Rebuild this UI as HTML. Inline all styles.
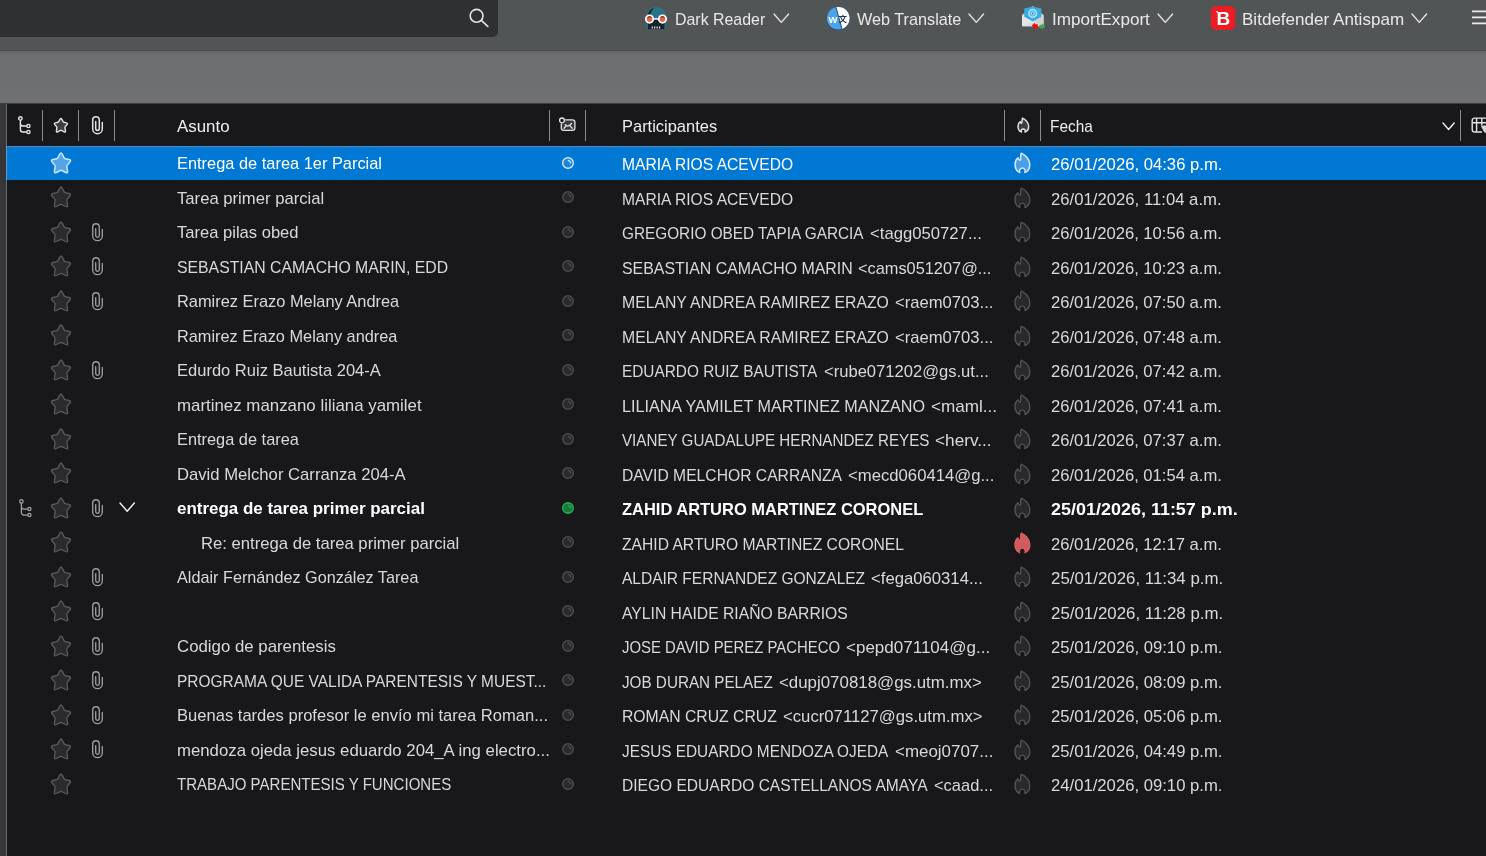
<!DOCTYPE html>
<html lang="es"><head><meta charset="utf-8"><title>Bandeja de entrada</title>
<style>
html,body{margin:0;padding:0}
body{width:1486px;height:856px;overflow:hidden;position:relative;background:#18181b;
 font-family:"Liberation Sans",sans-serif;color:#ececee;-webkit-font-smoothing:antialiased}
.abs,.ic,.t{position:absolute}
.ic{display:block;overflow:visible}
.t,.tb{transform-origin:0 50%}
.t,.tb{filter:grayscale(1)}
.t{white-space:nowrap;line-height:20px;height:20px;font-size:17.0px}
#toolbar{position:absolute;left:0;top:0;width:1486px;height:50px;background:#525556}
#tbline{position:absolute;left:0;top:50px;width:1486px;height:1px;background:#47494b}
#search{position:absolute;left:0;top:0;width:498px;height:37px;background:#2f3032;border-radius:0 0 5px 0}
#bar2{position:absolute;left:0;top:51px;width:1486px;height:52px;background:linear-gradient(#656668,#6e6f71 5px,#6f7072)}
#bar2b{position:absolute;left:0;top:103px;width:1486px;height:1px;background:#3d3e40}
#lstrip{position:absolute;left:0;top:104px;width:6px;height:752px;background:#343637}
#lline{position:absolute;left:6px;top:104px;width:1px;height:752px;background:#6b6b6b}
.tb{position:absolute;white-space:nowrap;font-size:16.2px;line-height:20px;height:20px;top:8.5px;color:#e9e9ea}
.sep{position:absolute;top:110px;width:1px;height:31px;background:#8c8c8f}
.row{position:absolute;left:7px;width:1479px}
.row.sel{background:#0078d4;border-top:1px solid #4a8fc6;box-sizing:border-box}
.hd{color:#ededef}
b,.b{font-weight:bold}
</style></head><body>

<div id="toolbar"></div><div id="tbline"></div><div id="search"></div>
<svg class="ic" style="left:466px;top:5px" width="26" height="26" viewBox="0 0 26 26"><g fill="none" stroke="#e4e4e6" stroke-width="1.6" stroke-linecap="round"><circle cx="10.6" cy="10.8" r="6.4"/><path d="M15.3 15.4 L21.8 21.4"/></g></svg>
<div id="bar2"></div><div id="bar2b"></div><div id="lstrip"></div><div id="lline"></div>
<svg class="ic" style="left:644px;top:5px" width="26" height="26" viewBox="0 0 26 26">
<path d="M2.5 24.1 V11.4 A9.7 9.7 0 0 1 21.9 11.4 V24.1 Z" fill="#2a7287"/>
<path d="M3.9 9.2 C5 5.9 7 4 9.9 3.1 C8 5 7 6.8 6.4 9.2 Z" fill="#131c24"/>
<path d="M3.9 15 H20.5 V24.1 H3.9 Z" fill="#17222c"/>
<circle cx="5.55" cy="14.1" r="3.7" fill="#e9633f" stroke="#fff" stroke-width="1.8"/>
<circle cx="18.45" cy="14.1" r="3.7" fill="#e9633f" stroke="#fff" stroke-width="1.8"/>
<path d="M9.6 13.9 H14.4" stroke="#fff" stroke-width="1.4"/>
<path d="M2.9 12.6 A2.9 2.9 0 0 1 8.2 12.6 Z M15.8 12.6 A2.9 2.9 0 0 1 21.1 12.6 Z" fill="#3a2a28" opacity=".75"/>
<path d="M8.3 21.4 V23.5 M10.7 21.4 V23.5 M13.1 21.4 V23.5 M15.5 21.4 V23.5" stroke="#dfecef" stroke-width="1.2"/>
</svg>
<div class="tb" style="left:675.4px;transform:scaleX(0.9827);" id="tb0">Dark Reader</div>
<svg class="ic" style="left:772.70px;top:12.60px" width="16.6" height="10.4" viewBox="-1 -1 16.6 10.4"><path d="M0 0 L7.3 8.4 L14.6 0" fill="none" stroke="#e9e9ea" stroke-width="1.3" stroke-linecap="round" stroke-linejoin="round"/></svg>
<svg class="ic" style="left:826px;top:6px;will-change:transform" width="25" height="25" viewBox="0 0 25 25">
<defs><clipPath id="wc"><circle cx="12.2" cy="12.2" r="11.3"/></clipPath></defs>
<circle cx="12.2" cy="12.5" r="11.6" fill="#20476b"/>
<g clip-path="url(#wc)"><rect width="25" height="25" fill="#4ba4ea"/><path d="M9.6 0 H25 V25 H16.6 Z" fill="#fdfdfd"/>
<path d="M9.6 0 L16.6 25" stroke="#1f3c58" stroke-width="0.9"/></g>
<text x="2.4" y="16.6" font-family="Liberation Sans, sans-serif" font-weight="bold" font-size="11.5" fill="#fff">w</text>
<text x="12.6" y="16.2" font-family="Liberation Sans, Noto Sans CJK SC, sans-serif" font-weight="bold" font-size="8.5" fill="#22384d">文</text>
</svg>
<div class="tb" style="left:856.6px;transform:scaleX(1.0021);" id="tb1">Web Translate</div>
<svg class="ic" style="left:968.00px;top:12.60px" width="16.6" height="10.4" viewBox="-1 -1 16.6 10.4"><path d="M0 0 L7.3 8.4 L14.6 0" fill="none" stroke="#e9e9ea" stroke-width="1.3" stroke-linecap="round" stroke-linejoin="round"/></svg>
<svg class="ic" style="left:1020px;top:4px" width="28" height="28" viewBox="0 0 28 28">
<path d="M2 11 L12.8 2 L23.6 11 V22.3 H2 Z" fill="#d9dadb"/>
<path d="M4.2 4.4 L9 3.6 L12.8 2.6 L16.6 3.6 L21.4 4.4 V13 L12.8 18 L4.2 13 Z" fill="#39a9e2"/>
<circle cx="12.7" cy="9.4" r="4.6" fill="#a6e4ff"/><circle cx="12.7" cy="9.4" r="2.6" fill="none" stroke="#39a9e2" stroke-width="1"/>
<circle cx="12.7" cy="9.4" r="1" fill="#2b7fb0"/>
<path d="M2 11.5 L12.8 17.6 L2 22.3 Z" fill="#e4e5e6"/><path d="M23.6 11.5 L12.8 17.6 L23.6 22.3 Z" fill="#cfd0d2"/>
<path d="M2 22.3 L12.8 17 L23.6 22.3 Z" fill="#dcdddf"/>
<path d="M11.6 21.5 L15 18.8 V20.2 H17.8 V24.4 H15.6 L15.4 25.6 Z" fill="#f20d0d"/>
<path d="M25.4 22.2 L22 19.4 V20.8 H19.4 V24.6 H22 V25.6 Z" fill="#41a852"/>
</svg>
<div class="tb" style="left:1051.6px;transform:scaleX(1.0559);" id="tb2">ImportExport</div>
<svg class="ic" style="left:1157.30px;top:12.60px" width="16.6" height="10.4" viewBox="-1 -1 16.6 10.4"><path d="M0 0 L7.3 8.4 L14.6 0" fill="none" stroke="#e9e9ea" stroke-width="1.3" stroke-linecap="round" stroke-linejoin="round"/></svg>
<svg class="ic" style="left:1210px;top:5px;will-change:transform" width="26" height="26" viewBox="0 0 26 26">
<rect x="0.9" y="1" width="24.4" height="24" rx="5.2" fill="#ec1c24"/>
<text x="13.3" y="19.9" text-anchor="middle" font-family="Liberation Sans, sans-serif" font-weight="bold" font-size="19" fill="#fff">B</text><path d="M5.7 6.25 H8 V8.4 Z" fill="#fff"/>
</svg>
<div class="tb" style="left:1242.2px;transform:scaleX(1.0534);" id="tb3">Bitdefender Antispam</div>
<svg class="ic" style="left:1410.70px;top:12.60px" width="16.6" height="10.4" viewBox="-1 -1 16.6 10.4"><path d="M0 0 L7.3 8.4 L14.6 0" fill="none" stroke="#e9e9ea" stroke-width="1.3" stroke-linecap="round" stroke-linejoin="round"/></svg>
<svg class="ic" style="left:1472px;top:8px" width="14" height="20" viewBox="0 0 14 20"><path d="M0 3.3 H14 M0 9.4 H14 M0 15.4 H14" stroke="#ececed" stroke-width="1.7" fill="none"/></svg>
<div class="sep" style="left:42px"></div>
<div class="sep" style="left:78px"></div>
<div class="sep" style="left:114px"></div>
<div class="sep" style="left:549px"></div>
<div class="sep" style="left:585px"></div>
<div class="sep" style="left:1004px"></div>
<div class="sep" style="left:1040px"></div>
<div class="sep" style="left:1460px"></div>
<svg class="ic" style="left:18.40px;top:116.00px" width="13" height="19" viewBox="0 0 13 19"><g fill="none" stroke="#e6e6e8" stroke-width="1.4"><circle cx="2.4" cy="2.4" r="1.7"/><circle cx="10.4" cy="10" r="1.6"/><circle cx="10.4" cy="16" r="1.6"/><path d="M2.4 4.1 V13.5 A2.5 2.5 0 0 0 4.9 16 H8.8 M2.4 7.5 A2.5 2.5 0 0 0 4.9 10 H8.8"/></g></svg>
<svg class="ic" style="left:52.37px;top:116.97px" width="17.87" height="17.87" viewBox="-13 -13 26 26"><path d="M-1.21 -9.87 L-1.21 -9.87 Q0.00 -12.17 1.21 -9.87 L3.16 -6.16 Q3.53 -5.46 4.31 -5.29 L8.04 -4.48 Q10.59 -3.93 8.89 -1.96 L6.24 1.13 Q5.71 1.74 5.84 2.53 L6.58 7.08 Q7.00 9.64 4.67 8.49 L0.72 6.54 Q0.00 6.19 -0.72 6.54 L-4.67 8.49 Q-7.00 9.64 -6.58 7.08 L-5.84 2.53 Q-5.71 1.74 -6.24 1.13 L-8.89 -1.96 Q-10.59 -3.93 -8.04 -4.48 L-4.31 -5.29 Q-3.53 -5.46 -3.16 -6.16 Z" fill="#3d3d42" stroke="#e2e2e4" stroke-width="2.04" stroke-linejoin="round"/></svg>
<svg class="ic" style="left:92.10px;top:116.10px" width="11" height="18.4" viewBox="0 0 11 18.4"><path d="M10.3 6.5 V12.9 A4.8 4.8 0 0 1 0.7 12.9 V4.1 A3.3 3.3 0 0 1 7.3 4.1 V12.6 A1.8 1.8 0 0 1 3.7 12.6 V5.6" fill="none" stroke="#e2e2e4" stroke-width="1.5" stroke-linecap="round"/></svg>
<div class="t hd" style="left:177px;top:116.5px;transform:scaleX(0.9929);" id="h0">Asunto</div>
<svg class="ic" style="left:558px;top:116px" width="19" height="16" viewBox="0 0 19 16">
<g fill="none" stroke="#e2e2e4" stroke-width="1.3" stroke-linecap="round" stroke-linejoin="round">
<path d="M7.6 3.8 H14.6 A2.3 2.3 0 0 1 16.9 6.1 V12 A2.3 2.3 0 0 1 14.6 14.3 H5.6 A2.3 2.3 0 0 1 3.3 12 V7.8" fill="#3a3a3f"/>
<path d="M6 12.2 L8.4 9.6 M14.2 12.2 L11.8 9.6 M7.2 8.6 C9 10.6 11.2 10.6 13.6 7.4"/>
<circle cx="4" cy="4.4" r="2.4" fill="#18181b"/></g></svg>
<div class="t hd" style="left:622.3px;top:116.5px;transform:scaleX(0.9680);" id="h1">Participantes</div>
<svg class="ic" style="left:1016.70px;top:116.70px" width="12.60" height="16.20" viewBox="0 0 16.8 21" preserveAspectRatio="none"><g transform="translate(8.4 10.5) scale(0.8810) translate(-8.4 -10.5)"><path d="M7.2 0.3 C10.5 1.6 16.5 6 16.5 12.3 C16.5 16.5 14 19.8 11.1 20.8 C11.9 18.5 10.8 16.1 8.3 16.1 C5.8 16.1 4.7 18.5 5.5 20.8 C2.6 19.6 0.3 16.5 0.3 12.3 C0.3 9.5 1.5 6.8 3.7 5.3 C4 6.8 4.7 7.8 5.7 7.8 C6.7 7.8 6.5 5.2 6.5 3.6 C6.5 2.2 6.8 1 7.2 0.3 Z" fill="#3d3d42" stroke="#e2e2e4" stroke-width="2.27" stroke-linejoin="round"/></g></svg>
<div class="t hd" style="left:1050.2px;top:116.5px;transform:scaleX(0.9059);" id="h2">Fecha</div>
<svg class="ic" style="left:1442.30px;top:121.55px" width="13.2" height="8.5" viewBox="-1 -1 13.2 8.5"><path d="M0 0 L5.6 6.5 L11.2 0" fill="none" stroke="#f0f0f2" stroke-width="1.4" stroke-linecap="round" stroke-linejoin="round"/></svg>
<svg class="ic" style="left:1470px;top:116px" width="16" height="18" viewBox="0 0 16 18">
<g fill="none" stroke="#e2e2e4" stroke-width="1.4">
<path d="M16 2.1 H4.8 A2.6 2.6 0 0 0 2.2 4.7 V13.4 A2.6 2.6 0 0 0 4.8 16 H12"/>
<path d="M2.2 6.8 H16 M6.6 2.1 V16 M11.8 2.1 V9"/></g>
<path d="M10.6 9.4 H16 V16.4 H14.4 Z" fill="#d6d6d8"/></svg>
<div class="abs" style="left:7px;top:145px;width:1479px;height:1px;background:#0c1c2b"></div>
<div class="row sel" style="top:146px;height:34px"></div>
<div class="abs" style="left:7px;top:147px;width:1479px;height:1px;background:#1674c8"></div>
<div class="abs" style="left:7px;top:180px;width:1479px;height:1px;background:#07192a"></div>
<div class="abs" style="left:6px;top:146px;width:1px;height:34px;background:#5b9bd0"></div>
<svg class="ic" style="left:48.05px;top:150.65px" width="26.00" height="26.00" viewBox="-13 -13 26 26"><path d="M-1.21 -9.87 L-1.21 -9.87 Q0.00 -12.17 1.21 -9.87 L3.16 -6.16 Q3.53 -5.46 4.31 -5.29 L8.04 -4.48 Q10.59 -3.93 8.89 -1.96 L6.24 1.13 Q5.71 1.74 5.84 2.53 L6.58 7.08 Q7.00 9.64 4.67 8.49 L0.72 6.54 Q0.00 6.19 -0.72 6.54 L-4.67 8.49 Q-7.00 9.64 -6.58 7.08 L-5.84 2.53 Q-5.71 1.74 -6.24 1.13 L-8.89 -1.96 Q-10.59 -3.93 -8.04 -4.48 L-4.31 -5.29 Q-3.53 -5.46 -3.16 -6.16 Z" fill="#55a5e6" stroke="#c4e8ff" stroke-width="1.50" stroke-linejoin="round"/></svg>
<svg class="ic" style="left:560.60px;top:155.65px" width="14" height="14" viewBox="0 0 14 14"><circle cx="7" cy="7" r="5.3" fill="#1a84da" stroke="#d9ecfb" stroke-width="1.4"/><path d="M7.3 4.3 A3 3 0 0 1 9.6 6.8" fill="none" stroke="#d9ecfb" stroke-width="1.3" stroke-linecap="round"/></svg>
<svg class="ic" style="left:1013.90px;top:152.05px" width="16.80" height="21.60" viewBox="0 0 16.8 21" preserveAspectRatio="none"><g transform="translate(8.4 10.5) scale(0.9107) translate(-8.4 -10.5)"><path d="M7.2 0.3 C10.5 1.6 16.5 6 16.5 12.3 C16.5 16.5 14 19.8 11.1 20.8 C11.9 18.5 10.8 16.1 8.3 16.1 C5.8 16.1 4.7 18.5 5.5 20.8 C2.6 19.6 0.3 16.5 0.3 12.3 C0.3 9.5 1.5 6.8 3.7 5.3 C4 6.8 4.7 7.8 5.7 7.8 C6.7 7.8 6.5 5.2 6.5 3.6 C6.5 2.2 6.8 1 7.2 0.3 Z" fill="#4a9fe4" stroke="#cfe8ff" stroke-width="1.65" stroke-linejoin="round"/></g></svg>
<div class="t" id="s0" style="left:177.0px;top:154.05px;color:#ffffff;transform:scaleX(0.9642);">Entrega de tarea 1er Parcial</div>
<div class="t" id="p0" style="left:622.3px;top:155.05px;color:#ffffff;transform:scaleX(0.9192);">MARIA RIOS ACEVEDO</div>
<div class="t" id="d0" style="left:1050.6px;top:155.05px;color:#ffffff;transform:scaleX(0.9806);">26/01/2026, 04:36 p.m.</div>
<svg class="ic" style="left:48.05px;top:185.15px" width="26.00" height="26.00" viewBox="-13 -13 26 26"><path d="M-1.21 -9.87 L-1.21 -9.87 Q0.00 -12.17 1.21 -9.87 L3.16 -6.16 Q3.53 -5.46 4.31 -5.29 L8.04 -4.48 Q10.59 -3.93 8.89 -1.96 L6.24 1.13 Q5.71 1.74 5.84 2.53 L6.58 7.08 Q7.00 9.64 4.67 8.49 L0.72 6.54 Q0.00 6.19 -0.72 6.54 L-4.67 8.49 Q-7.00 9.64 -6.58 7.08 L-5.84 2.53 Q-5.71 1.74 -6.24 1.13 L-8.89 -1.96 Q-10.59 -3.93 -8.04 -4.48 L-4.31 -5.29 Q-3.53 -5.46 -3.16 -6.16 Z" fill="#2b2b2e" stroke="#58585d" stroke-width="1.35" stroke-linejoin="round"/></svg>
<svg class="ic" style="left:560.70px;top:190.35px" width="14" height="14" viewBox="0 0 14 14"><circle cx="7" cy="7" r="5.3" fill="#2a2a2d" stroke="#4c4c51" stroke-width="1.4"/><path d="M7.3 4.3 A3 3 0 0 1 9.6 6.8" fill="none" stroke="#4c4c51" stroke-width="1.3" stroke-linecap="round"/></svg>
<svg class="ic" style="left:1013.90px;top:186.55px" width="16.80" height="21.60" viewBox="0 0 16.8 21" preserveAspectRatio="none"><g transform="translate(8.4 10.5) scale(0.9196) translate(-8.4 -10.5)"><path d="M7.2 0.3 C10.5 1.6 16.5 6 16.5 12.3 C16.5 16.5 14 19.8 11.1 20.8 C11.9 18.5 10.8 16.1 8.3 16.1 C5.8 16.1 4.7 18.5 5.5 20.8 C2.6 19.6 0.3 16.5 0.3 12.3 C0.3 9.5 1.5 6.8 3.7 5.3 C4 6.8 4.7 7.8 5.7 7.8 C6.7 7.8 6.5 5.2 6.5 3.6 C6.5 2.2 6.8 1 7.2 0.3 Z" fill="#29292c" stroke="#515156" stroke-width="1.47" stroke-linejoin="round"/></g></svg>
<div class="t" id="s1" style="left:177.0px;top:188.55px;color:#d9d9dd;transform:scaleX(0.9800);">Tarea primer parcial</div>
<div class="t" id="p1" style="left:622.3px;top:189.55px;color:#d9d9dd;transform:scaleX(0.9192);">MARIA RIOS ACEVEDO</div>
<div class="t" id="d1" style="left:1050.6px;top:189.55px;color:#d9d9dd;transform:scaleX(0.9827);">26/01/2026, 11:04 a.m.</div>
<svg class="ic" style="left:48.05px;top:219.65px" width="26.00" height="26.00" viewBox="-13 -13 26 26"><path d="M-1.21 -9.87 L-1.21 -9.87 Q0.00 -12.17 1.21 -9.87 L3.16 -6.16 Q3.53 -5.46 4.31 -5.29 L8.04 -4.48 Q10.59 -3.93 8.89 -1.96 L6.24 1.13 Q5.71 1.74 5.84 2.53 L6.58 7.08 Q7.00 9.64 4.67 8.49 L0.72 6.54 Q0.00 6.19 -0.72 6.54 L-4.67 8.49 Q-7.00 9.64 -6.58 7.08 L-5.84 2.53 Q-5.71 1.74 -6.24 1.13 L-8.89 -1.96 Q-10.59 -3.93 -8.04 -4.48 L-4.31 -5.29 Q-3.53 -5.46 -3.16 -6.16 Z" fill="#2b2b2e" stroke="#58585d" stroke-width="1.35" stroke-linejoin="round"/></svg>
<svg class="ic" style="left:92.20px;top:222.95px" width="11" height="18.4" viewBox="0 0 11 18.4"><path d="M10.3 6.5 V12.9 A4.8 4.8 0 0 1 0.7 12.9 V4.1 A3.3 3.3 0 0 1 7.3 4.1 V12.6 A1.8 1.8 0 0 1 3.7 12.6 V5.6" fill="none" stroke="#9c9ca2" stroke-width="1.35" stroke-linecap="round"/></svg>
<svg class="ic" style="left:560.70px;top:224.85px" width="14" height="14" viewBox="0 0 14 14"><circle cx="7" cy="7" r="5.3" fill="#2a2a2d" stroke="#4c4c51" stroke-width="1.4"/><path d="M7.3 4.3 A3 3 0 0 1 9.6 6.8" fill="none" stroke="#4c4c51" stroke-width="1.3" stroke-linecap="round"/></svg>
<svg class="ic" style="left:1013.90px;top:221.05px" width="16.80" height="21.60" viewBox="0 0 16.8 21" preserveAspectRatio="none"><g transform="translate(8.4 10.5) scale(0.9196) translate(-8.4 -10.5)"><path d="M7.2 0.3 C10.5 1.6 16.5 6 16.5 12.3 C16.5 16.5 14 19.8 11.1 20.8 C11.9 18.5 10.8 16.1 8.3 16.1 C5.8 16.1 4.7 18.5 5.5 20.8 C2.6 19.6 0.3 16.5 0.3 12.3 C0.3 9.5 1.5 6.8 3.7 5.3 C4 6.8 4.7 7.8 5.7 7.8 C6.7 7.8 6.5 5.2 6.5 3.6 C6.5 2.2 6.8 1 7.2 0.3 Z" fill="#29292c" stroke="#515156" stroke-width="1.47" stroke-linejoin="round"/></g></svg>
<div class="t" id="s2" style="left:177.0px;top:223.05px;color:#d9d9dd;transform:scaleX(0.9743);">Tarea pilas obed</div>
<div class="t" id="p2" style="left:622.3px;top:224.05px;color:#d9d9dd;transform:scaleX(0.9024);">GREGORIO OBED TAPIA GARCIA</div>
<div class="t" id="e2" style="left:869.6px;top:224.05px;color:#d9d9dd;transform:scaleX(0.9814);">&lt;tagg050727...</div>
<div class="t" id="d2" style="left:1050.6px;top:224.05px;color:#d9d9dd;transform:scaleX(0.9771);">26/01/2026, 10:56 a.m.</div>
<svg class="ic" style="left:48.05px;top:254.15px" width="26.00" height="26.00" viewBox="-13 -13 26 26"><path d="M-1.21 -9.87 L-1.21 -9.87 Q0.00 -12.17 1.21 -9.87 L3.16 -6.16 Q3.53 -5.46 4.31 -5.29 L8.04 -4.48 Q10.59 -3.93 8.89 -1.96 L6.24 1.13 Q5.71 1.74 5.84 2.53 L6.58 7.08 Q7.00 9.64 4.67 8.49 L0.72 6.54 Q0.00 6.19 -0.72 6.54 L-4.67 8.49 Q-7.00 9.64 -6.58 7.08 L-5.84 2.53 Q-5.71 1.74 -6.24 1.13 L-8.89 -1.96 Q-10.59 -3.93 -8.04 -4.48 L-4.31 -5.29 Q-3.53 -5.46 -3.16 -6.16 Z" fill="#2b2b2e" stroke="#58585d" stroke-width="1.35" stroke-linejoin="round"/></svg>
<svg class="ic" style="left:92.20px;top:257.45px" width="11" height="18.4" viewBox="0 0 11 18.4"><path d="M10.3 6.5 V12.9 A4.8 4.8 0 0 1 0.7 12.9 V4.1 A3.3 3.3 0 0 1 7.3 4.1 V12.6 A1.8 1.8 0 0 1 3.7 12.6 V5.6" fill="none" stroke="#9c9ca2" stroke-width="1.35" stroke-linecap="round"/></svg>
<svg class="ic" style="left:560.70px;top:259.35px" width="14" height="14" viewBox="0 0 14 14"><circle cx="7" cy="7" r="5.3" fill="#2a2a2d" stroke="#4c4c51" stroke-width="1.4"/><path d="M7.3 4.3 A3 3 0 0 1 9.6 6.8" fill="none" stroke="#4c4c51" stroke-width="1.3" stroke-linecap="round"/></svg>
<svg class="ic" style="left:1013.90px;top:255.55px" width="16.80" height="21.60" viewBox="0 0 16.8 21" preserveAspectRatio="none"><g transform="translate(8.4 10.5) scale(0.9196) translate(-8.4 -10.5)"><path d="M7.2 0.3 C10.5 1.6 16.5 6 16.5 12.3 C16.5 16.5 14 19.8 11.1 20.8 C11.9 18.5 10.8 16.1 8.3 16.1 C5.8 16.1 4.7 18.5 5.5 20.8 C2.6 19.6 0.3 16.5 0.3 12.3 C0.3 9.5 1.5 6.8 3.7 5.3 C4 6.8 4.7 7.8 5.7 7.8 C6.7 7.8 6.5 5.2 6.5 3.6 C6.5 2.2 6.8 1 7.2 0.3 Z" fill="#29292c" stroke="#515156" stroke-width="1.47" stroke-linejoin="round"/></g></svg>
<div class="t" id="s3" style="left:177.0px;top:257.55px;color:#d9d9dd;transform:scaleX(0.9288);">SEBASTIAN CAMACHO MARIN, EDD</div>
<div class="t" id="p3" style="left:622.3px;top:258.55px;color:#d9d9dd;transform:scaleX(0.9360);">SEBASTIAN CAMACHO MARIN</div>
<div class="t" id="e3" style="left:857.8px;top:258.55px;color:#d9d9dd;transform:scaleX(0.9614);">&lt;cams051207@...</div>
<div class="t" id="d3" style="left:1050.6px;top:258.55px;color:#d9d9dd;transform:scaleX(0.9771);">26/01/2026, 10:23 a.m.</div>
<svg class="ic" style="left:48.05px;top:288.65px" width="26.00" height="26.00" viewBox="-13 -13 26 26"><path d="M-1.21 -9.87 L-1.21 -9.87 Q0.00 -12.17 1.21 -9.87 L3.16 -6.16 Q3.53 -5.46 4.31 -5.29 L8.04 -4.48 Q10.59 -3.93 8.89 -1.96 L6.24 1.13 Q5.71 1.74 5.84 2.53 L6.58 7.08 Q7.00 9.64 4.67 8.49 L0.72 6.54 Q0.00 6.19 -0.72 6.54 L-4.67 8.49 Q-7.00 9.64 -6.58 7.08 L-5.84 2.53 Q-5.71 1.74 -6.24 1.13 L-8.89 -1.96 Q-10.59 -3.93 -8.04 -4.48 L-4.31 -5.29 Q-3.53 -5.46 -3.16 -6.16 Z" fill="#2b2b2e" stroke="#58585d" stroke-width="1.35" stroke-linejoin="round"/></svg>
<svg class="ic" style="left:92.20px;top:291.95px" width="11" height="18.4" viewBox="0 0 11 18.4"><path d="M10.3 6.5 V12.9 A4.8 4.8 0 0 1 0.7 12.9 V4.1 A3.3 3.3 0 0 1 7.3 4.1 V12.6 A1.8 1.8 0 0 1 3.7 12.6 V5.6" fill="none" stroke="#9c9ca2" stroke-width="1.35" stroke-linecap="round"/></svg>
<svg class="ic" style="left:560.70px;top:293.85px" width="14" height="14" viewBox="0 0 14 14"><circle cx="7" cy="7" r="5.3" fill="#2a2a2d" stroke="#4c4c51" stroke-width="1.4"/><path d="M7.3 4.3 A3 3 0 0 1 9.6 6.8" fill="none" stroke="#4c4c51" stroke-width="1.3" stroke-linecap="round"/></svg>
<svg class="ic" style="left:1013.90px;top:290.05px" width="16.80" height="21.60" viewBox="0 0 16.8 21" preserveAspectRatio="none"><g transform="translate(8.4 10.5) scale(0.9196) translate(-8.4 -10.5)"><path d="M7.2 0.3 C10.5 1.6 16.5 6 16.5 12.3 C16.5 16.5 14 19.8 11.1 20.8 C11.9 18.5 10.8 16.1 8.3 16.1 C5.8 16.1 4.7 18.5 5.5 20.8 C2.6 19.6 0.3 16.5 0.3 12.3 C0.3 9.5 1.5 6.8 3.7 5.3 C4 6.8 4.7 7.8 5.7 7.8 C6.7 7.8 6.5 5.2 6.5 3.6 C6.5 2.2 6.8 1 7.2 0.3 Z" fill="#29292c" stroke="#515156" stroke-width="1.47" stroke-linejoin="round"/></g></svg>
<div class="t" id="s4" style="left:177.0px;top:292.05px;color:#d9d9dd;transform:scaleX(0.9637);">Ramirez Erazo Melany Andrea</div>
<div class="t" id="p4" style="left:622.3px;top:293.05px;color:#d9d9dd;transform:scaleX(0.9273);">MELANY ANDREA RAMIREZ ERAZO</div>
<div class="t" id="e4" style="left:894.5px;top:293.05px;color:#d9d9dd;transform:scaleX(0.9780);">&lt;raem0703...</div>
<div class="t" id="d4" style="left:1050.6px;top:293.05px;color:#d9d9dd;transform:scaleX(0.9771);">26/01/2026, 07:50 a.m.</div>
<svg class="ic" style="left:48.05px;top:323.15px" width="26.00" height="26.00" viewBox="-13 -13 26 26"><path d="M-1.21 -9.87 L-1.21 -9.87 Q0.00 -12.17 1.21 -9.87 L3.16 -6.16 Q3.53 -5.46 4.31 -5.29 L8.04 -4.48 Q10.59 -3.93 8.89 -1.96 L6.24 1.13 Q5.71 1.74 5.84 2.53 L6.58 7.08 Q7.00 9.64 4.67 8.49 L0.72 6.54 Q0.00 6.19 -0.72 6.54 L-4.67 8.49 Q-7.00 9.64 -6.58 7.08 L-5.84 2.53 Q-5.71 1.74 -6.24 1.13 L-8.89 -1.96 Q-10.59 -3.93 -8.04 -4.48 L-4.31 -5.29 Q-3.53 -5.46 -3.16 -6.16 Z" fill="#2b2b2e" stroke="#58585d" stroke-width="1.35" stroke-linejoin="round"/></svg>
<svg class="ic" style="left:560.70px;top:328.35px" width="14" height="14" viewBox="0 0 14 14"><circle cx="7" cy="7" r="5.3" fill="#2a2a2d" stroke="#4c4c51" stroke-width="1.4"/><path d="M7.3 4.3 A3 3 0 0 1 9.6 6.8" fill="none" stroke="#4c4c51" stroke-width="1.3" stroke-linecap="round"/></svg>
<svg class="ic" style="left:1013.90px;top:324.55px" width="16.80" height="21.60" viewBox="0 0 16.8 21" preserveAspectRatio="none"><g transform="translate(8.4 10.5) scale(0.9196) translate(-8.4 -10.5)"><path d="M7.2 0.3 C10.5 1.6 16.5 6 16.5 12.3 C16.5 16.5 14 19.8 11.1 20.8 C11.9 18.5 10.8 16.1 8.3 16.1 C5.8 16.1 4.7 18.5 5.5 20.8 C2.6 19.6 0.3 16.5 0.3 12.3 C0.3 9.5 1.5 6.8 3.7 5.3 C4 6.8 4.7 7.8 5.7 7.8 C6.7 7.8 6.5 5.2 6.5 3.6 C6.5 2.2 6.8 1 7.2 0.3 Z" fill="#29292c" stroke="#515156" stroke-width="1.47" stroke-linejoin="round"/></g></svg>
<div class="t" id="s5" style="left:177.0px;top:326.55px;color:#d9d9dd;transform:scaleX(0.9600);">Ramirez Erazo Melany andrea</div>
<div class="t" id="p5" style="left:622.3px;top:327.55px;color:#d9d9dd;transform:scaleX(0.9273);">MELANY ANDREA RAMIREZ ERAZO</div>
<div class="t" id="e5" style="left:894.5px;top:327.55px;color:#d9d9dd;transform:scaleX(0.9780);">&lt;raem0703...</div>
<div class="t" id="d5" style="left:1050.6px;top:327.55px;color:#d9d9dd;transform:scaleX(0.9771);">26/01/2026, 07:48 a.m.</div>
<svg class="ic" style="left:48.05px;top:357.65px" width="26.00" height="26.00" viewBox="-13 -13 26 26"><path d="M-1.21 -9.87 L-1.21 -9.87 Q0.00 -12.17 1.21 -9.87 L3.16 -6.16 Q3.53 -5.46 4.31 -5.29 L8.04 -4.48 Q10.59 -3.93 8.89 -1.96 L6.24 1.13 Q5.71 1.74 5.84 2.53 L6.58 7.08 Q7.00 9.64 4.67 8.49 L0.72 6.54 Q0.00 6.19 -0.72 6.54 L-4.67 8.49 Q-7.00 9.64 -6.58 7.08 L-5.84 2.53 Q-5.71 1.74 -6.24 1.13 L-8.89 -1.96 Q-10.59 -3.93 -8.04 -4.48 L-4.31 -5.29 Q-3.53 -5.46 -3.16 -6.16 Z" fill="#2b2b2e" stroke="#58585d" stroke-width="1.35" stroke-linejoin="round"/></svg>
<svg class="ic" style="left:92.20px;top:360.95px" width="11" height="18.4" viewBox="0 0 11 18.4"><path d="M10.3 6.5 V12.9 A4.8 4.8 0 0 1 0.7 12.9 V4.1 A3.3 3.3 0 0 1 7.3 4.1 V12.6 A1.8 1.8 0 0 1 3.7 12.6 V5.6" fill="none" stroke="#9c9ca2" stroke-width="1.35" stroke-linecap="round"/></svg>
<svg class="ic" style="left:560.70px;top:362.85px" width="14" height="14" viewBox="0 0 14 14"><circle cx="7" cy="7" r="5.3" fill="#2a2a2d" stroke="#4c4c51" stroke-width="1.4"/><path d="M7.3 4.3 A3 3 0 0 1 9.6 6.8" fill="none" stroke="#4c4c51" stroke-width="1.3" stroke-linecap="round"/></svg>
<svg class="ic" style="left:1013.90px;top:359.05px" width="16.80" height="21.60" viewBox="0 0 16.8 21" preserveAspectRatio="none"><g transform="translate(8.4 10.5) scale(0.9196) translate(-8.4 -10.5)"><path d="M7.2 0.3 C10.5 1.6 16.5 6 16.5 12.3 C16.5 16.5 14 19.8 11.1 20.8 C11.9 18.5 10.8 16.1 8.3 16.1 C5.8 16.1 4.7 18.5 5.5 20.8 C2.6 19.6 0.3 16.5 0.3 12.3 C0.3 9.5 1.5 6.8 3.7 5.3 C4 6.8 4.7 7.8 5.7 7.8 C6.7 7.8 6.5 5.2 6.5 3.6 C6.5 2.2 6.8 1 7.2 0.3 Z" fill="#29292c" stroke="#515156" stroke-width="1.47" stroke-linejoin="round"/></g></svg>
<div class="t" id="s6" style="left:177.0px;top:361.05px;color:#d9d9dd;transform:scaleX(0.9715);">Edurdo Ruiz Bautista 204-A</div>
<div class="t" id="p6" style="left:622.3px;top:362.05px;color:#d9d9dd;transform:scaleX(0.9042);">EDUARDO RUIZ BAUTISTA</div>
<div class="t" id="e6" style="left:823.7px;top:362.05px;color:#d9d9dd;transform:scaleX(0.9751);">&lt;rube071202@gs.ut...</div>
<div class="t" id="d6" style="left:1050.6px;top:362.05px;color:#d9d9dd;transform:scaleX(0.9771);">26/01/2026, 07:42 a.m.</div>
<svg class="ic" style="left:48.05px;top:392.15px" width="26.00" height="26.00" viewBox="-13 -13 26 26"><path d="M-1.21 -9.87 L-1.21 -9.87 Q0.00 -12.17 1.21 -9.87 L3.16 -6.16 Q3.53 -5.46 4.31 -5.29 L8.04 -4.48 Q10.59 -3.93 8.89 -1.96 L6.24 1.13 Q5.71 1.74 5.84 2.53 L6.58 7.08 Q7.00 9.64 4.67 8.49 L0.72 6.54 Q0.00 6.19 -0.72 6.54 L-4.67 8.49 Q-7.00 9.64 -6.58 7.08 L-5.84 2.53 Q-5.71 1.74 -6.24 1.13 L-8.89 -1.96 Q-10.59 -3.93 -8.04 -4.48 L-4.31 -5.29 Q-3.53 -5.46 -3.16 -6.16 Z" fill="#2b2b2e" stroke="#58585d" stroke-width="1.35" stroke-linejoin="round"/></svg>
<svg class="ic" style="left:560.70px;top:397.35px" width="14" height="14" viewBox="0 0 14 14"><circle cx="7" cy="7" r="5.3" fill="#2a2a2d" stroke="#4c4c51" stroke-width="1.4"/><path d="M7.3 4.3 A3 3 0 0 1 9.6 6.8" fill="none" stroke="#4c4c51" stroke-width="1.3" stroke-linecap="round"/></svg>
<svg class="ic" style="left:1013.90px;top:393.55px" width="16.80" height="21.60" viewBox="0 0 16.8 21" preserveAspectRatio="none"><g transform="translate(8.4 10.5) scale(0.9196) translate(-8.4 -10.5)"><path d="M7.2 0.3 C10.5 1.6 16.5 6 16.5 12.3 C16.5 16.5 14 19.8 11.1 20.8 C11.9 18.5 10.8 16.1 8.3 16.1 C5.8 16.1 4.7 18.5 5.5 20.8 C2.6 19.6 0.3 16.5 0.3 12.3 C0.3 9.5 1.5 6.8 3.7 5.3 C4 6.8 4.7 7.8 5.7 7.8 C6.7 7.8 6.5 5.2 6.5 3.6 C6.5 2.2 6.8 1 7.2 0.3 Z" fill="#29292c" stroke="#515156" stroke-width="1.47" stroke-linejoin="round"/></g></svg>
<div class="t" id="s7" style="left:177.0px;top:395.55px;color:#d9d9dd;transform:scaleX(0.9919);">martinez manzano liliana yamilet</div>
<div class="t" id="p7" style="left:622.3px;top:396.55px;color:#d9d9dd;transform:scaleX(0.9499);">LILIANA YAMILET MARTINEZ MANZANO</div>
<div class="t" id="e7" style="left:930.8px;top:396.55px;color:#d9d9dd;transform:scaleX(1.0065);">&lt;maml...</div>
<div class="t" id="d7" style="left:1050.6px;top:396.55px;color:#d9d9dd;transform:scaleX(0.9771);">26/01/2026, 07:41 a.m.</div>
<svg class="ic" style="left:48.05px;top:426.65px" width="26.00" height="26.00" viewBox="-13 -13 26 26"><path d="M-1.21 -9.87 L-1.21 -9.87 Q0.00 -12.17 1.21 -9.87 L3.16 -6.16 Q3.53 -5.46 4.31 -5.29 L8.04 -4.48 Q10.59 -3.93 8.89 -1.96 L6.24 1.13 Q5.71 1.74 5.84 2.53 L6.58 7.08 Q7.00 9.64 4.67 8.49 L0.72 6.54 Q0.00 6.19 -0.72 6.54 L-4.67 8.49 Q-7.00 9.64 -6.58 7.08 L-5.84 2.53 Q-5.71 1.74 -6.24 1.13 L-8.89 -1.96 Q-10.59 -3.93 -8.04 -4.48 L-4.31 -5.29 Q-3.53 -5.46 -3.16 -6.16 Z" fill="#2b2b2e" stroke="#58585d" stroke-width="1.35" stroke-linejoin="round"/></svg>
<svg class="ic" style="left:560.70px;top:431.85px" width="14" height="14" viewBox="0 0 14 14"><circle cx="7" cy="7" r="5.3" fill="#2a2a2d" stroke="#4c4c51" stroke-width="1.4"/><path d="M7.3 4.3 A3 3 0 0 1 9.6 6.8" fill="none" stroke="#4c4c51" stroke-width="1.3" stroke-linecap="round"/></svg>
<svg class="ic" style="left:1013.90px;top:428.05px" width="16.80" height="21.60" viewBox="0 0 16.8 21" preserveAspectRatio="none"><g transform="translate(8.4 10.5) scale(0.9196) translate(-8.4 -10.5)"><path d="M7.2 0.3 C10.5 1.6 16.5 6 16.5 12.3 C16.5 16.5 14 19.8 11.1 20.8 C11.9 18.5 10.8 16.1 8.3 16.1 C5.8 16.1 4.7 18.5 5.5 20.8 C2.6 19.6 0.3 16.5 0.3 12.3 C0.3 9.5 1.5 6.8 3.7 5.3 C4 6.8 4.7 7.8 5.7 7.8 C6.7 7.8 6.5 5.2 6.5 3.6 C6.5 2.2 6.8 1 7.2 0.3 Z" fill="#29292c" stroke="#515156" stroke-width="1.47" stroke-linejoin="round"/></g></svg>
<div class="t" id="s8" style="left:177.0px;top:430.05px;color:#d9d9dd;transform:scaleX(0.9623);">Entrega de tarea</div>
<div class="t" id="p8" style="left:622.3px;top:431.05px;color:#d9d9dd;transform:scaleX(0.8923);">VIANEY GUADALUPE HERNANDEZ REYES</div>
<div class="t" id="e8" style="left:935.2px;top:431.05px;color:#d9d9dd;transform:scaleX(1.0131);">&lt;herv...</div>
<div class="t" id="d8" style="left:1050.6px;top:431.05px;color:#d9d9dd;transform:scaleX(0.9771);">26/01/2026, 07:37 a.m.</div>
<svg class="ic" style="left:48.05px;top:461.15px" width="26.00" height="26.00" viewBox="-13 -13 26 26"><path d="M-1.21 -9.87 L-1.21 -9.87 Q0.00 -12.17 1.21 -9.87 L3.16 -6.16 Q3.53 -5.46 4.31 -5.29 L8.04 -4.48 Q10.59 -3.93 8.89 -1.96 L6.24 1.13 Q5.71 1.74 5.84 2.53 L6.58 7.08 Q7.00 9.64 4.67 8.49 L0.72 6.54 Q0.00 6.19 -0.72 6.54 L-4.67 8.49 Q-7.00 9.64 -6.58 7.08 L-5.84 2.53 Q-5.71 1.74 -6.24 1.13 L-8.89 -1.96 Q-10.59 -3.93 -8.04 -4.48 L-4.31 -5.29 Q-3.53 -5.46 -3.16 -6.16 Z" fill="#2b2b2e" stroke="#58585d" stroke-width="1.35" stroke-linejoin="round"/></svg>
<svg class="ic" style="left:560.70px;top:466.35px" width="14" height="14" viewBox="0 0 14 14"><circle cx="7" cy="7" r="5.3" fill="#2a2a2d" stroke="#4c4c51" stroke-width="1.4"/><path d="M7.3 4.3 A3 3 0 0 1 9.6 6.8" fill="none" stroke="#4c4c51" stroke-width="1.3" stroke-linecap="round"/></svg>
<svg class="ic" style="left:1013.90px;top:462.55px" width="16.80" height="21.60" viewBox="0 0 16.8 21" preserveAspectRatio="none"><g transform="translate(8.4 10.5) scale(0.9196) translate(-8.4 -10.5)"><path d="M7.2 0.3 C10.5 1.6 16.5 6 16.5 12.3 C16.5 16.5 14 19.8 11.1 20.8 C11.9 18.5 10.8 16.1 8.3 16.1 C5.8 16.1 4.7 18.5 5.5 20.8 C2.6 19.6 0.3 16.5 0.3 12.3 C0.3 9.5 1.5 6.8 3.7 5.3 C4 6.8 4.7 7.8 5.7 7.8 C6.7 7.8 6.5 5.2 6.5 3.6 C6.5 2.2 6.8 1 7.2 0.3 Z" fill="#29292c" stroke="#515156" stroke-width="1.47" stroke-linejoin="round"/></g></svg>
<div class="t" id="s9" style="left:177.0px;top:464.55px;color:#d9d9dd;transform:scaleX(0.9795);">David Melchor Carranza 204-A</div>
<div class="t" id="p9" style="left:622.3px;top:465.55px;color:#d9d9dd;transform:scaleX(0.9220);">DAVID MELCHOR CARRANZA</div>
<div class="t" id="e9" style="left:848.1px;top:465.55px;color:#d9d9dd;transform:scaleX(0.9818);">&lt;mecd060414@g...</div>
<div class="t" id="d9" style="left:1050.6px;top:465.55px;color:#d9d9dd;transform:scaleX(0.9771);">26/01/2026, 01:54 a.m.</div>
<svg class="ic" style="left:18.90px;top:499.05px" width="13" height="19" viewBox="0 0 13 19"><g fill="none" stroke="#a3a3a9" stroke-width="1.25"><circle cx="2.4" cy="2.4" r="1.7"/><circle cx="10.4" cy="10" r="1.6"/><circle cx="10.4" cy="16" r="1.6"/><path d="M2.4 4.1 V13.5 A2.5 2.5 0 0 0 4.9 16 H8.8 M2.4 7.5 A2.5 2.5 0 0 0 4.9 10 H8.8"/></g></svg>
<svg class="ic" style="left:118.70px;top:502.45px" width="16.4" height="10.2" viewBox="-1 -1 16.4 10.2"><path d="M0 0 L7.2 8.2 L14.4 0" fill="none" stroke="#f4f4f6" stroke-width="1.4" stroke-linecap="round" stroke-linejoin="round"/></svg>
<svg class="ic" style="left:48.05px;top:495.65px" width="26.00" height="26.00" viewBox="-13 -13 26 26"><path d="M-1.21 -9.87 L-1.21 -9.87 Q0.00 -12.17 1.21 -9.87 L3.16 -6.16 Q3.53 -5.46 4.31 -5.29 L8.04 -4.48 Q10.59 -3.93 8.89 -1.96 L6.24 1.13 Q5.71 1.74 5.84 2.53 L6.58 7.08 Q7.00 9.64 4.67 8.49 L0.72 6.54 Q0.00 6.19 -0.72 6.54 L-4.67 8.49 Q-7.00 9.64 -6.58 7.08 L-5.84 2.53 Q-5.71 1.74 -6.24 1.13 L-8.89 -1.96 Q-10.59 -3.93 -8.04 -4.48 L-4.31 -5.29 Q-3.53 -5.46 -3.16 -6.16 Z" fill="#2b2b2e" stroke="#58585d" stroke-width="1.35" stroke-linejoin="round"/></svg>
<svg class="ic" style="left:92.20px;top:498.95px" width="11" height="18.4" viewBox="0 0 11 18.4"><path d="M10.3 6.5 V12.9 A4.8 4.8 0 0 1 0.7 12.9 V4.1 A3.3 3.3 0 0 1 7.3 4.1 V12.6 A1.8 1.8 0 0 1 3.7 12.6 V5.6" fill="none" stroke="#9c9ca2" stroke-width="1.35" stroke-linecap="round"/></svg>
<svg class="ic" style="left:560.80px;top:500.85px" width="14" height="14" viewBox="0 0 14 14"><circle cx="7" cy="7" r="5.3" fill="#167a3a" stroke="#27b055" stroke-width="1.4"/><path d="M7.3 4.3 A3 3 0 0 1 9.6 6.8" fill="none" stroke="#27b055" stroke-width="1.3" stroke-linecap="round"/></svg>
<svg class="ic" style="left:1013.90px;top:497.05px" width="16.80" height="21.60" viewBox="0 0 16.8 21" preserveAspectRatio="none"><g transform="translate(8.4 10.5) scale(0.9196) translate(-8.4 -10.5)"><path d="M7.2 0.3 C10.5 1.6 16.5 6 16.5 12.3 C16.5 16.5 14 19.8 11.1 20.8 C11.9 18.5 10.8 16.1 8.3 16.1 C5.8 16.1 4.7 18.5 5.5 20.8 C2.6 19.6 0.3 16.5 0.3 12.3 C0.3 9.5 1.5 6.8 3.7 5.3 C4 6.8 4.7 7.8 5.7 7.8 C6.7 7.8 6.5 5.2 6.5 3.6 C6.5 2.2 6.8 1 7.2 0.3 Z" fill="#29292c" stroke="#515156" stroke-width="1.47" stroke-linejoin="round"/></g></svg>
<div class="t" id="s10" style="left:177.0px;top:499.05px;color:#ffffff;font-weight:bold;transform:scaleX(0.9976);">entrega de tarea primer parcial</div>
<div class="t" id="p10" style="left:622.3px;top:500.05px;color:#ffffff;font-weight:bold;transform:scaleX(0.9686);">ZAHID ARTURO MARTINEZ CORONEL</div>
<div class="t" id="d10" style="left:1050.6px;top:500.05px;color:#ffffff;font-weight:bold;transform:scaleX(1.0568);">25/01/2026, 11:57 p.m.</div>
<svg class="ic" style="left:48.05px;top:530.15px" width="26.00" height="26.00" viewBox="-13 -13 26 26"><path d="M-1.21 -9.87 L-1.21 -9.87 Q0.00 -12.17 1.21 -9.87 L3.16 -6.16 Q3.53 -5.46 4.31 -5.29 L8.04 -4.48 Q10.59 -3.93 8.89 -1.96 L6.24 1.13 Q5.71 1.74 5.84 2.53 L6.58 7.08 Q7.00 9.64 4.67 8.49 L0.72 6.54 Q0.00 6.19 -0.72 6.54 L-4.67 8.49 Q-7.00 9.64 -6.58 7.08 L-5.84 2.53 Q-5.71 1.74 -6.24 1.13 L-8.89 -1.96 Q-10.59 -3.93 -8.04 -4.48 L-4.31 -5.29 Q-3.53 -5.46 -3.16 -6.16 Z" fill="#2b2b2e" stroke="#58585d" stroke-width="1.35" stroke-linejoin="round"/></svg>
<svg class="ic" style="left:560.70px;top:535.35px" width="14" height="14" viewBox="0 0 14 14"><circle cx="7" cy="7" r="5.3" fill="#2a2a2d" stroke="#4c4c51" stroke-width="1.4"/><path d="M7.3 4.3 A3 3 0 0 1 9.6 6.8" fill="none" stroke="#4c4c51" stroke-width="1.3" stroke-linecap="round"/></svg>
<svg class="ic" style="left:1013.90px;top:531.55px" width="16.80" height="21.60" viewBox="0 0 16.8 21" preserveAspectRatio="none"><g transform="translate(8.4 10.5) scale(0.9286) translate(-8.4 -10.5)"><path d="M7.2 0.3 C10.5 1.6 16.5 6 16.5 12.3 C16.5 16.5 14 19.8 11.1 20.8 C11.9 18.5 10.8 16.1 8.3 16.1 C5.8 16.1 4.7 18.5 5.5 20.8 C2.6 19.6 0.3 16.5 0.3 12.3 C0.3 9.5 1.5 6.8 3.7 5.3 C4 6.8 4.7 7.8 5.7 7.8 C6.7 7.8 6.5 5.2 6.5 3.6 C6.5 2.2 6.8 1 7.2 0.3 Z" fill="#cf5b5e" stroke="#dc5f63" stroke-width="1.29" stroke-linejoin="round"/></g></svg>
<div class="t" id="s11" style="left:201.0px;top:533.55px;color:#d9d9dd;transform:scaleX(0.9795);">Re: entrega de tarea primer parcial</div>
<div class="t" id="p11" style="left:622.3px;top:534.55px;color:#d9d9dd;transform:scaleX(0.9205);">ZAHID ARTURO MARTINEZ CORONEL</div>
<div class="t" id="d11" style="left:1050.6px;top:534.55px;color:#d9d9dd;transform:scaleX(0.9771);">26/01/2026, 12:17 a.m.</div>
<svg class="ic" style="left:48.05px;top:564.65px" width="26.00" height="26.00" viewBox="-13 -13 26 26"><path d="M-1.21 -9.87 L-1.21 -9.87 Q0.00 -12.17 1.21 -9.87 L3.16 -6.16 Q3.53 -5.46 4.31 -5.29 L8.04 -4.48 Q10.59 -3.93 8.89 -1.96 L6.24 1.13 Q5.71 1.74 5.84 2.53 L6.58 7.08 Q7.00 9.64 4.67 8.49 L0.72 6.54 Q0.00 6.19 -0.72 6.54 L-4.67 8.49 Q-7.00 9.64 -6.58 7.08 L-5.84 2.53 Q-5.71 1.74 -6.24 1.13 L-8.89 -1.96 Q-10.59 -3.93 -8.04 -4.48 L-4.31 -5.29 Q-3.53 -5.46 -3.16 -6.16 Z" fill="#2b2b2e" stroke="#58585d" stroke-width="1.35" stroke-linejoin="round"/></svg>
<svg class="ic" style="left:92.20px;top:567.95px" width="11" height="18.4" viewBox="0 0 11 18.4"><path d="M10.3 6.5 V12.9 A4.8 4.8 0 0 1 0.7 12.9 V4.1 A3.3 3.3 0 0 1 7.3 4.1 V12.6 A1.8 1.8 0 0 1 3.7 12.6 V5.6" fill="none" stroke="#9c9ca2" stroke-width="1.35" stroke-linecap="round"/></svg>
<svg class="ic" style="left:560.70px;top:569.85px" width="14" height="14" viewBox="0 0 14 14"><circle cx="7" cy="7" r="5.3" fill="#2a2a2d" stroke="#4c4c51" stroke-width="1.4"/><path d="M7.3 4.3 A3 3 0 0 1 9.6 6.8" fill="none" stroke="#4c4c51" stroke-width="1.3" stroke-linecap="round"/></svg>
<svg class="ic" style="left:1013.90px;top:566.05px" width="16.80" height="21.60" viewBox="0 0 16.8 21" preserveAspectRatio="none"><g transform="translate(8.4 10.5) scale(0.9196) translate(-8.4 -10.5)"><path d="M7.2 0.3 C10.5 1.6 16.5 6 16.5 12.3 C16.5 16.5 14 19.8 11.1 20.8 C11.9 18.5 10.8 16.1 8.3 16.1 C5.8 16.1 4.7 18.5 5.5 20.8 C2.6 19.6 0.3 16.5 0.3 12.3 C0.3 9.5 1.5 6.8 3.7 5.3 C4 6.8 4.7 7.8 5.7 7.8 C6.7 7.8 6.5 5.2 6.5 3.6 C6.5 2.2 6.8 1 7.2 0.3 Z" fill="#29292c" stroke="#515156" stroke-width="1.47" stroke-linejoin="round"/></g></svg>
<div class="t" id="s12" style="left:177.0px;top:568.05px;color:#d9d9dd;transform:scaleX(0.9544);">Aldair Fernández González Tarea</div>
<div class="t" id="p12" style="left:622.3px;top:569.05px;color:#d9d9dd;transform:scaleX(0.9126);">ALDAIR FERNANDEZ GONZALEZ</div>
<div class="t" id="e12" style="left:870.8px;top:569.05px;color:#d9d9dd;transform:scaleX(0.9816);">&lt;fega060314...</div>
<div class="t" id="d12" style="left:1050.6px;top:569.05px;color:#d9d9dd;transform:scaleX(0.9919);">25/01/2026, 11:34 p.m.</div>
<svg class="ic" style="left:48.05px;top:599.15px" width="26.00" height="26.00" viewBox="-13 -13 26 26"><path d="M-1.21 -9.87 L-1.21 -9.87 Q0.00 -12.17 1.21 -9.87 L3.16 -6.16 Q3.53 -5.46 4.31 -5.29 L8.04 -4.48 Q10.59 -3.93 8.89 -1.96 L6.24 1.13 Q5.71 1.74 5.84 2.53 L6.58 7.08 Q7.00 9.64 4.67 8.49 L0.72 6.54 Q0.00 6.19 -0.72 6.54 L-4.67 8.49 Q-7.00 9.64 -6.58 7.08 L-5.84 2.53 Q-5.71 1.74 -6.24 1.13 L-8.89 -1.96 Q-10.59 -3.93 -8.04 -4.48 L-4.31 -5.29 Q-3.53 -5.46 -3.16 -6.16 Z" fill="#2b2b2e" stroke="#58585d" stroke-width="1.35" stroke-linejoin="round"/></svg>
<svg class="ic" style="left:92.20px;top:602.45px" width="11" height="18.4" viewBox="0 0 11 18.4"><path d="M10.3 6.5 V12.9 A4.8 4.8 0 0 1 0.7 12.9 V4.1 A3.3 3.3 0 0 1 7.3 4.1 V12.6 A1.8 1.8 0 0 1 3.7 12.6 V5.6" fill="none" stroke="#9c9ca2" stroke-width="1.35" stroke-linecap="round"/></svg>
<svg class="ic" style="left:560.70px;top:604.35px" width="14" height="14" viewBox="0 0 14 14"><circle cx="7" cy="7" r="5.3" fill="#2a2a2d" stroke="#4c4c51" stroke-width="1.4"/><path d="M7.3 4.3 A3 3 0 0 1 9.6 6.8" fill="none" stroke="#4c4c51" stroke-width="1.3" stroke-linecap="round"/></svg>
<svg class="ic" style="left:1013.90px;top:600.55px" width="16.80" height="21.60" viewBox="0 0 16.8 21" preserveAspectRatio="none"><g transform="translate(8.4 10.5) scale(0.9196) translate(-8.4 -10.5)"><path d="M7.2 0.3 C10.5 1.6 16.5 6 16.5 12.3 C16.5 16.5 14 19.8 11.1 20.8 C11.9 18.5 10.8 16.1 8.3 16.1 C5.8 16.1 4.7 18.5 5.5 20.8 C2.6 19.6 0.3 16.5 0.3 12.3 C0.3 9.5 1.5 6.8 3.7 5.3 C4 6.8 4.7 7.8 5.7 7.8 C6.7 7.8 6.5 5.2 6.5 3.6 C6.5 2.2 6.8 1 7.2 0.3 Z" fill="#29292c" stroke="#515156" stroke-width="1.47" stroke-linejoin="round"/></g></svg>
<div class="t" id="p13" style="left:622.3px;top:603.55px;color:#d9d9dd;transform:scaleX(0.9240);">AYLIN HAIDE RIAÑO BARRIOS</div>
<div class="t" id="d13" style="left:1050.6px;top:603.55px;color:#d9d9dd;transform:scaleX(0.9919);">25/01/2026, 11:28 p.m.</div>
<svg class="ic" style="left:48.05px;top:633.65px" width="26.00" height="26.00" viewBox="-13 -13 26 26"><path d="M-1.21 -9.87 L-1.21 -9.87 Q0.00 -12.17 1.21 -9.87 L3.16 -6.16 Q3.53 -5.46 4.31 -5.29 L8.04 -4.48 Q10.59 -3.93 8.89 -1.96 L6.24 1.13 Q5.71 1.74 5.84 2.53 L6.58 7.08 Q7.00 9.64 4.67 8.49 L0.72 6.54 Q0.00 6.19 -0.72 6.54 L-4.67 8.49 Q-7.00 9.64 -6.58 7.08 L-5.84 2.53 Q-5.71 1.74 -6.24 1.13 L-8.89 -1.96 Q-10.59 -3.93 -8.04 -4.48 L-4.31 -5.29 Q-3.53 -5.46 -3.16 -6.16 Z" fill="#2b2b2e" stroke="#58585d" stroke-width="1.35" stroke-linejoin="round"/></svg>
<svg class="ic" style="left:92.20px;top:636.95px" width="11" height="18.4" viewBox="0 0 11 18.4"><path d="M10.3 6.5 V12.9 A4.8 4.8 0 0 1 0.7 12.9 V4.1 A3.3 3.3 0 0 1 7.3 4.1 V12.6 A1.8 1.8 0 0 1 3.7 12.6 V5.6" fill="none" stroke="#9c9ca2" stroke-width="1.35" stroke-linecap="round"/></svg>
<svg class="ic" style="left:560.70px;top:638.85px" width="14" height="14" viewBox="0 0 14 14"><circle cx="7" cy="7" r="5.3" fill="#2a2a2d" stroke="#4c4c51" stroke-width="1.4"/><path d="M7.3 4.3 A3 3 0 0 1 9.6 6.8" fill="none" stroke="#4c4c51" stroke-width="1.3" stroke-linecap="round"/></svg>
<svg class="ic" style="left:1013.90px;top:635.05px" width="16.80" height="21.60" viewBox="0 0 16.8 21" preserveAspectRatio="none"><g transform="translate(8.4 10.5) scale(0.9196) translate(-8.4 -10.5)"><path d="M7.2 0.3 C10.5 1.6 16.5 6 16.5 12.3 C16.5 16.5 14 19.8 11.1 20.8 C11.9 18.5 10.8 16.1 8.3 16.1 C5.8 16.1 4.7 18.5 5.5 20.8 C2.6 19.6 0.3 16.5 0.3 12.3 C0.3 9.5 1.5 6.8 3.7 5.3 C4 6.8 4.7 7.8 5.7 7.8 C6.7 7.8 6.5 5.2 6.5 3.6 C6.5 2.2 6.8 1 7.2 0.3 Z" fill="#29292c" stroke="#515156" stroke-width="1.47" stroke-linejoin="round"/></g></svg>
<div class="t" id="s14" style="left:177.0px;top:637.05px;color:#d9d9dd;transform:scaleX(0.9889);">Codigo de parentesis</div>
<div class="t" id="p14" style="left:622.3px;top:638.05px;color:#d9d9dd;transform:scaleX(0.8767);">JOSE DAVID PEREZ PACHECO</div>
<div class="t" id="e14" style="left:846.0px;top:638.05px;color:#d9d9dd;transform:scaleX(1.0007);">&lt;pepd071104@g...</div>
<div class="t" id="d14" style="left:1050.6px;top:638.05px;color:#d9d9dd;transform:scaleX(0.9806);">25/01/2026, 09:10 p.m.</div>
<svg class="ic" style="left:48.05px;top:668.15px" width="26.00" height="26.00" viewBox="-13 -13 26 26"><path d="M-1.21 -9.87 L-1.21 -9.87 Q0.00 -12.17 1.21 -9.87 L3.16 -6.16 Q3.53 -5.46 4.31 -5.29 L8.04 -4.48 Q10.59 -3.93 8.89 -1.96 L6.24 1.13 Q5.71 1.74 5.84 2.53 L6.58 7.08 Q7.00 9.64 4.67 8.49 L0.72 6.54 Q0.00 6.19 -0.72 6.54 L-4.67 8.49 Q-7.00 9.64 -6.58 7.08 L-5.84 2.53 Q-5.71 1.74 -6.24 1.13 L-8.89 -1.96 Q-10.59 -3.93 -8.04 -4.48 L-4.31 -5.29 Q-3.53 -5.46 -3.16 -6.16 Z" fill="#2b2b2e" stroke="#58585d" stroke-width="1.35" stroke-linejoin="round"/></svg>
<svg class="ic" style="left:92.20px;top:671.45px" width="11" height="18.4" viewBox="0 0 11 18.4"><path d="M10.3 6.5 V12.9 A4.8 4.8 0 0 1 0.7 12.9 V4.1 A3.3 3.3 0 0 1 7.3 4.1 V12.6 A1.8 1.8 0 0 1 3.7 12.6 V5.6" fill="none" stroke="#9c9ca2" stroke-width="1.35" stroke-linecap="round"/></svg>
<svg class="ic" style="left:560.70px;top:673.35px" width="14" height="14" viewBox="0 0 14 14"><circle cx="7" cy="7" r="5.3" fill="#2a2a2d" stroke="#4c4c51" stroke-width="1.4"/><path d="M7.3 4.3 A3 3 0 0 1 9.6 6.8" fill="none" stroke="#4c4c51" stroke-width="1.3" stroke-linecap="round"/></svg>
<svg class="ic" style="left:1013.90px;top:669.55px" width="16.80" height="21.60" viewBox="0 0 16.8 21" preserveAspectRatio="none"><g transform="translate(8.4 10.5) scale(0.9196) translate(-8.4 -10.5)"><path d="M7.2 0.3 C10.5 1.6 16.5 6 16.5 12.3 C16.5 16.5 14 19.8 11.1 20.8 C11.9 18.5 10.8 16.1 8.3 16.1 C5.8 16.1 4.7 18.5 5.5 20.8 C2.6 19.6 0.3 16.5 0.3 12.3 C0.3 9.5 1.5 6.8 3.7 5.3 C4 6.8 4.7 7.8 5.7 7.8 C6.7 7.8 6.5 5.2 6.5 3.6 C6.5 2.2 6.8 1 7.2 0.3 Z" fill="#29292c" stroke="#515156" stroke-width="1.47" stroke-linejoin="round"/></g></svg>
<div class="t" id="s15" style="left:177.0px;top:671.55px;color:#d9d9dd;transform:scaleX(0.9101);">PROGRAMA QUE VALIDA PARENTESIS Y MUEST...</div>
<div class="t" id="p15" style="left:622.3px;top:672.55px;color:#d9d9dd;transform:scaleX(0.8964);">JOB DURAN PELAEZ</div>
<div class="t" id="e15" style="left:778.7px;top:672.55px;color:#d9d9dd;transform:scaleX(0.9922);">&lt;dupj070818@gs.utm.mx&gt;</div>
<div class="t" id="d15" style="left:1050.6px;top:672.55px;color:#d9d9dd;transform:scaleX(0.9806);">25/01/2026, 08:09 p.m.</div>
<svg class="ic" style="left:48.05px;top:702.65px" width="26.00" height="26.00" viewBox="-13 -13 26 26"><path d="M-1.21 -9.87 L-1.21 -9.87 Q0.00 -12.17 1.21 -9.87 L3.16 -6.16 Q3.53 -5.46 4.31 -5.29 L8.04 -4.48 Q10.59 -3.93 8.89 -1.96 L6.24 1.13 Q5.71 1.74 5.84 2.53 L6.58 7.08 Q7.00 9.64 4.67 8.49 L0.72 6.54 Q0.00 6.19 -0.72 6.54 L-4.67 8.49 Q-7.00 9.64 -6.58 7.08 L-5.84 2.53 Q-5.71 1.74 -6.24 1.13 L-8.89 -1.96 Q-10.59 -3.93 -8.04 -4.48 L-4.31 -5.29 Q-3.53 -5.46 -3.16 -6.16 Z" fill="#2b2b2e" stroke="#58585d" stroke-width="1.35" stroke-linejoin="round"/></svg>
<svg class="ic" style="left:92.20px;top:705.95px" width="11" height="18.4" viewBox="0 0 11 18.4"><path d="M10.3 6.5 V12.9 A4.8 4.8 0 0 1 0.7 12.9 V4.1 A3.3 3.3 0 0 1 7.3 4.1 V12.6 A1.8 1.8 0 0 1 3.7 12.6 V5.6" fill="none" stroke="#9c9ca2" stroke-width="1.35" stroke-linecap="round"/></svg>
<svg class="ic" style="left:560.70px;top:707.85px" width="14" height="14" viewBox="0 0 14 14"><circle cx="7" cy="7" r="5.3" fill="#2a2a2d" stroke="#4c4c51" stroke-width="1.4"/><path d="M7.3 4.3 A3 3 0 0 1 9.6 6.8" fill="none" stroke="#4c4c51" stroke-width="1.3" stroke-linecap="round"/></svg>
<svg class="ic" style="left:1013.90px;top:704.05px" width="16.80" height="21.60" viewBox="0 0 16.8 21" preserveAspectRatio="none"><g transform="translate(8.4 10.5) scale(0.9196) translate(-8.4 -10.5)"><path d="M7.2 0.3 C10.5 1.6 16.5 6 16.5 12.3 C16.5 16.5 14 19.8 11.1 20.8 C11.9 18.5 10.8 16.1 8.3 16.1 C5.8 16.1 4.7 18.5 5.5 20.8 C2.6 19.6 0.3 16.5 0.3 12.3 C0.3 9.5 1.5 6.8 3.7 5.3 C4 6.8 4.7 7.8 5.7 7.8 C6.7 7.8 6.5 5.2 6.5 3.6 C6.5 2.2 6.8 1 7.2 0.3 Z" fill="#29292c" stroke="#515156" stroke-width="1.47" stroke-linejoin="round"/></g></svg>
<div class="t" id="s16" style="left:177.0px;top:706.05px;color:#d9d9dd;transform:scaleX(0.9744);">Buenas tardes profesor le envío mi tarea Roman...</div>
<div class="t" id="p16" style="left:622.3px;top:707.05px;color:#d9d9dd;transform:scaleX(0.9261);">ROMAN CRUZ CRUZ</div>
<div class="t" id="e16" style="left:782.6px;top:707.05px;color:#d9d9dd;transform:scaleX(0.9827);">&lt;cucr071127@gs.utm.mx&gt;</div>
<div class="t" id="d16" style="left:1050.6px;top:707.05px;color:#d9d9dd;transform:scaleX(0.9806);">25/01/2026, 05:06 p.m.</div>
<svg class="ic" style="left:48.05px;top:737.15px" width="26.00" height="26.00" viewBox="-13 -13 26 26"><path d="M-1.21 -9.87 L-1.21 -9.87 Q0.00 -12.17 1.21 -9.87 L3.16 -6.16 Q3.53 -5.46 4.31 -5.29 L8.04 -4.48 Q10.59 -3.93 8.89 -1.96 L6.24 1.13 Q5.71 1.74 5.84 2.53 L6.58 7.08 Q7.00 9.64 4.67 8.49 L0.72 6.54 Q0.00 6.19 -0.72 6.54 L-4.67 8.49 Q-7.00 9.64 -6.58 7.08 L-5.84 2.53 Q-5.71 1.74 -6.24 1.13 L-8.89 -1.96 Q-10.59 -3.93 -8.04 -4.48 L-4.31 -5.29 Q-3.53 -5.46 -3.16 -6.16 Z" fill="#2b2b2e" stroke="#58585d" stroke-width="1.35" stroke-linejoin="round"/></svg>
<svg class="ic" style="left:92.20px;top:740.45px" width="11" height="18.4" viewBox="0 0 11 18.4"><path d="M10.3 6.5 V12.9 A4.8 4.8 0 0 1 0.7 12.9 V4.1 A3.3 3.3 0 0 1 7.3 4.1 V12.6 A1.8 1.8 0 0 1 3.7 12.6 V5.6" fill="none" stroke="#9c9ca2" stroke-width="1.35" stroke-linecap="round"/></svg>
<svg class="ic" style="left:560.70px;top:742.35px" width="14" height="14" viewBox="0 0 14 14"><circle cx="7" cy="7" r="5.3" fill="#2a2a2d" stroke="#4c4c51" stroke-width="1.4"/><path d="M7.3 4.3 A3 3 0 0 1 9.6 6.8" fill="none" stroke="#4c4c51" stroke-width="1.3" stroke-linecap="round"/></svg>
<svg class="ic" style="left:1013.90px;top:738.55px" width="16.80" height="21.60" viewBox="0 0 16.8 21" preserveAspectRatio="none"><g transform="translate(8.4 10.5) scale(0.9196) translate(-8.4 -10.5)"><path d="M7.2 0.3 C10.5 1.6 16.5 6 16.5 12.3 C16.5 16.5 14 19.8 11.1 20.8 C11.9 18.5 10.8 16.1 8.3 16.1 C5.8 16.1 4.7 18.5 5.5 20.8 C2.6 19.6 0.3 16.5 0.3 12.3 C0.3 9.5 1.5 6.8 3.7 5.3 C4 6.8 4.7 7.8 5.7 7.8 C6.7 7.8 6.5 5.2 6.5 3.6 C6.5 2.2 6.8 1 7.2 0.3 Z" fill="#29292c" stroke="#515156" stroke-width="1.47" stroke-linejoin="round"/></g></svg>
<div class="t" id="s17" style="left:177.0px;top:740.55px;color:#d9d9dd;transform:scaleX(0.9863);">mendoza ojeda jesus eduardo 204_A ing electro...</div>
<div class="t" id="p17" style="left:622.3px;top:741.55px;color:#d9d9dd;transform:scaleX(0.9036);">JESUS EDUARDO MENDOZA OJEDA</div>
<div class="t" id="e17" style="left:894.7px;top:741.55px;color:#d9d9dd;transform:scaleX(0.9960);">&lt;meoj0707...</div>
<div class="t" id="d17" style="left:1050.6px;top:741.55px;color:#d9d9dd;transform:scaleX(0.9806);">25/01/2026, 04:49 p.m.</div>
<svg class="ic" style="left:48.05px;top:771.65px" width="26.00" height="26.00" viewBox="-13 -13 26 26"><path d="M-1.21 -9.87 L-1.21 -9.87 Q0.00 -12.17 1.21 -9.87 L3.16 -6.16 Q3.53 -5.46 4.31 -5.29 L8.04 -4.48 Q10.59 -3.93 8.89 -1.96 L6.24 1.13 Q5.71 1.74 5.84 2.53 L6.58 7.08 Q7.00 9.64 4.67 8.49 L0.72 6.54 Q0.00 6.19 -0.72 6.54 L-4.67 8.49 Q-7.00 9.64 -6.58 7.08 L-5.84 2.53 Q-5.71 1.74 -6.24 1.13 L-8.89 -1.96 Q-10.59 -3.93 -8.04 -4.48 L-4.31 -5.29 Q-3.53 -5.46 -3.16 -6.16 Z" fill="#2b2b2e" stroke="#58585d" stroke-width="1.35" stroke-linejoin="round"/></svg>
<svg class="ic" style="left:560.70px;top:776.85px" width="14" height="14" viewBox="0 0 14 14"><circle cx="7" cy="7" r="5.3" fill="#2a2a2d" stroke="#4c4c51" stroke-width="1.4"/><path d="M7.3 4.3 A3 3 0 0 1 9.6 6.8" fill="none" stroke="#4c4c51" stroke-width="1.3" stroke-linecap="round"/></svg>
<svg class="ic" style="left:1013.90px;top:773.05px" width="16.80" height="21.60" viewBox="0 0 16.8 21" preserveAspectRatio="none"><g transform="translate(8.4 10.5) scale(0.9196) translate(-8.4 -10.5)"><path d="M7.2 0.3 C10.5 1.6 16.5 6 16.5 12.3 C16.5 16.5 14 19.8 11.1 20.8 C11.9 18.5 10.8 16.1 8.3 16.1 C5.8 16.1 4.7 18.5 5.5 20.8 C2.6 19.6 0.3 16.5 0.3 12.3 C0.3 9.5 1.5 6.8 3.7 5.3 C4 6.8 4.7 7.8 5.7 7.8 C6.7 7.8 6.5 5.2 6.5 3.6 C6.5 2.2 6.8 1 7.2 0.3 Z" fill="#29292c" stroke="#515156" stroke-width="1.47" stroke-linejoin="round"/></g></svg>
<div class="t" id="s18" style="left:177.0px;top:775.05px;color:#d9d9dd;transform:scaleX(0.8852);">TRABAJO PARENTESIS Y FUNCIONES</div>
<div class="t" id="p18" style="left:622.3px;top:776.05px;color:#d9d9dd;transform:scaleX(0.9155);">DIEGO EDUARDO CASTELLANOS AMAYA</div>
<div class="t" id="e18" style="left:933.6px;top:776.05px;color:#d9d9dd;transform:scaleX(0.9687);">&lt;caad...</div>
<div class="t" id="d18" style="left:1050.6px;top:776.05px;color:#d9d9dd;transform:scaleX(0.9806);">24/01/2026, 09:10 p.m.</div>
</body></html>
